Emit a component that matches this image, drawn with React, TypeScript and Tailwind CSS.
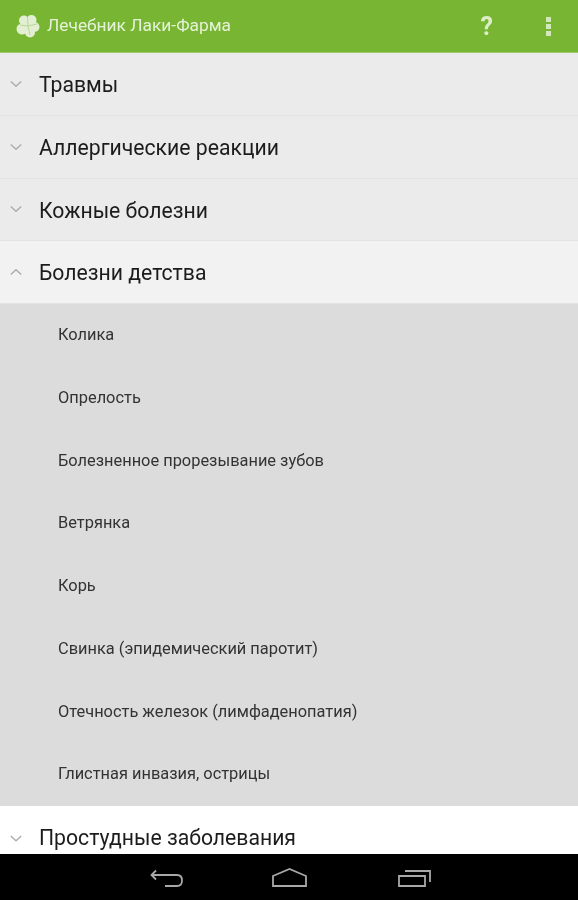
import React from "react";

const font = { fontFamily: "Roboto, sans-serif" };

function Chevron({ up = false }: { up?: boolean }) {
  return (
    <svg width="12" height="7" viewBox="0 0 12 7" className="absolute left-[10px] top-1/2 -translate-y-1/2" fill="none" stroke="#acacac" strokeWidth="1.4">
      <path d={up ? "M0.8 6 L6 1.2 L11.2 6" : "M0.8 1 L6 5.8 L11.2 1"} />
    </svg>
  );
}

function Group({ title, up = false, bg = "bg-[#ebebeb]" }: { title: string; up?: boolean; bg?: string }) {
  return (
    <div className={`relative flex h-[62.75px] shrink-0 items-center border-b border-[#e3e3e3] pl-[39px] ${bg}`}>
      <Chevron up={up} />
      <span className="mt-[1.5px] text-[21.2px] leading-none text-[#1c1c1c]">{title}</span>
    </div>
  );
}

function Sub({ title }: { title: string }) {
  return (
    <div className="flex h-[62.75px] shrink-0 items-center pl-[58px]">
      <span className="text-[16.4px] leading-none text-[#333333]">{title}</span>
    </div>
  );
}

export default function App() {
  return (
    <div className="flex h-[900px] w-[578px] flex-col overflow-hidden bg-white blur-[0.5px]" style={font}>
      <header className="flex h-[53px] shrink-0 items-center border-b border-[#9dc86a] bg-[#77b532] pl-[16px]">
        <svg width="24" height="24" viewBox="0 0 24 24" fill="#e2efd3">
          <circle cx="8" cy="6.5" r="5" />
          <circle cx="15.5" cy="6" r="5" />
          <circle cx="18.5" cy="13" r="5" />
          <circle cx="14" cy="18.5" r="5" />
          <circle cx="6" cy="15" r="5.5" />
          <circle cx="12" cy="12" r="5" />
          <path d="M12 12 L11.5 3 M12 12 L21 10 M12 12 L14 21 M12 12 L4 11" stroke="#b9d896" strokeWidth="1" fill="none" />
        </svg>
        <span className="ml-[7px] text-[17.35px] leading-none text-[#e6f2d8]">Лечебник Лаки-Фарма</span>
        <span className="ml-auto mr-[53px] text-[25px] font-bold leading-none text-[#dcedc8]">?</span>
        <div className="mr-[27px] flex flex-col gap-[2px]">
          <span className="h-[5px] w-[5px] bg-[#d3e8ba]" />
          <span className="h-[5px] w-[5px] bg-[#d3e8ba]" />
          <span className="h-[5px] w-[5px] bg-[#d3e8ba]" />
        </div>
      </header>
      <Group title="Травмы" />
      <Group title="Аллергические реакции" />
      <Group title="Кожные болезни" />
      <Group title="Болезни детства" up bg="bg-[#f2f2f2]" />
      <div className="flex shrink-0 flex-col bg-[#dcdcdc]">
        <Sub title="Колика" />
        <Sub title="Опрелость" />
        <Sub title="Болезненное прорезывание зубов" />
        <Sub title="Ветрянка" />
        <Sub title="Корь" />
        <Sub title="Свинка (эпидемический паротит)" />
        <Sub title="Отечность железок (лимфаденопатия)" />
        <Sub title="Глистная инвазия, острицы" />
      </div>
      <div className="relative flex min-h-0 flex-1 items-center bg-white pl-[39px]">
        <svg width="12" height="7" viewBox="0 0 12 7" className="absolute left-[10px] top-[29px]" fill="none" stroke="#acacac" strokeWidth="1.4">
          <path d="M0.8 1 L6 5.8 L11.2 1" />
        </svg>
        <span className="mt-[15px] text-[21.2px] leading-none text-[#1c1c1c]">Простудные заболевания</span>
      </div>
      <nav className="flex h-[46px] shrink-0 items-start bg-black">
        <svg width="34" height="20" viewBox="0 0 34 20" className="ml-[150px] mt-[15px]" fill="none" stroke="#a8a8a8" strokeWidth="1.8">
          <path d="M6 1.5 L1.5 6 L6 10.5 M1.5 6 H27 Q32 6 32 11.5 Q32 17 27 17 H15" />
        </svg>
        <svg width="36" height="20" viewBox="0 0 36 20" className="ml-[88px] mt-[14px]" fill="none" stroke="#a8a8a8" strokeWidth="1.8">
          <path d="M1 8 L17.5 1 L34 8 V18 H1 Z" />
        </svg>
        <svg width="34" height="20" viewBox="0 0 34 20" className="ml-[90px] mt-[15px]" fill="none" stroke="#a8a8a8" strokeWidth="1.8">
          <path d="M1 7 H27 V17 H1 Z M7 2 H32 V13" />
        </svg>
      </nav>
    </div>
  );
}
